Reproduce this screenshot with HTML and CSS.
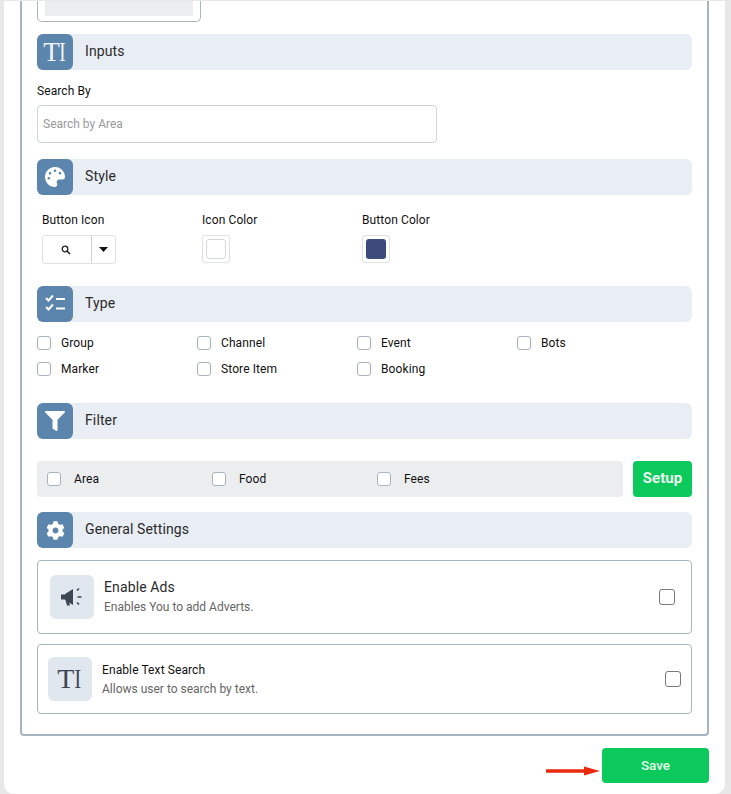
FILE: index.html
```html
<!DOCTYPE html>
<html lang="en">
<head>
<meta charset="utf-8">
<title>Search settings</title>
<link rel="stylesheet" href="styles.css">
</head>
<body>
<main class="modal">
  <div class="panel">
    <div class="stub"><div class="stub-fill"></div></div>

    <div class="section sec-inputs">
      <span class="sec-icon serif-icon">T<span class="narrow-i">I</span></span><h2>Inputs</h2>
    </div>
    <label class="field-label">Search By</label>
    <input class="search-input" type="text" placeholder="Search by Area">

    <div class="section sec-style">
      <span class="sec-icon"><svg class="ic-20" viewBox="0 0 512 512"><path fill="#fff" d="M204.3 5C104.9 24.4 24.8 104.3 5.2 203.4c-37 187 131.7 326.4 258.8 306.7 41.2-6.4 61.4-54.6 42.5-91.7-23.1-45.4 9.9-98.4 60.9-98.4h79.7c35.8 0 64.8-29.6 64.9-65.3C511.5 97.1 368.1-26.9 204.3 5zM96 320c-17.7 0-32-14.3-32-32s14.3-32 32-32 32 14.3 32 32-14.3 32-32 32zm32-128c-17.7 0-32-14.3-32-32s14.3-32 32-32 32 14.3 32 32-14.3 32-32 32zm128-64c-17.7 0-32-14.3-32-32s14.3-32 32-32 32 14.3 32 32-14.3 32-32 32zm128 64c-17.7 0-32-14.3-32-32s14.3-32 32-32 32 14.3 32 32-14.3 32-32 32z"/></svg></span><h2>Style</h2>
    </div>
    <div class="style-row">
      <div class="style-col">
        <div class="style-label">Button Icon</div>
        <div class="icon-picker">
          <span class="picker-main"><svg width="10" height="10" viewBox="0 0 10 10"><circle cx="4" cy="4" r="2.8" fill="none" stroke="#222" stroke-width="1.3"/><path d="M6 6l3 3" stroke="#222" stroke-width="1.6"/></svg></span>
          <span class="picker-caret"><svg width="9" height="5" viewBox="0 0 9 5"><path d="M0 0h9L4.500 5z" fill="#111"/></svg></span>
        </div>
      </div>
      <div class="style-col">
        <div class="style-label">Icon Color</div>
        <div class="swatch"><span class="swatch-fill swatch-white"></span></div>
      </div>
      <div class="style-col">
        <div class="style-label">Button Color</div>
        <div class="swatch"><span class="swatch-fill swatch-navy"></span></div>
      </div>
    </div>

    <div class="section sec-type">
      <span class="sec-icon"><svg class="ic-22" viewBox="0 0 22 22"><path d="M2 5l2.500 2.500L9 2.500M2 14l2.500 2.500L9 11.500" fill="none" stroke="#fff" stroke-width="2"/><path d="M12 6h9M12 15.500h9" stroke="#fff" stroke-width="2.200"/></svg></span><h2>Type</h2>
    </div>
    <div class="type-grid">
      <label class="check"><span class="box"></span>Group</label>
      <label class="check"><span class="box"></span>Channel</label>
      <label class="check"><span class="box"></span>Event</label>
      <label class="check"><span class="box"></span>Bots</label>
      <label class="check"><span class="box"></span>Marker</label>
      <label class="check"><span class="box"></span>Store Item</label>
      <label class="check"><span class="box"></span>Booking</label>
    </div>

    <div class="section sec-filter">
      <span class="sec-icon"><svg class="ic-20" viewBox="0 0 512 512"><path fill="#fff" d="M487.976 0H24.028C2.71 0-8.047 25.866 7.058 40.971L192 225.941V432c0 7.831 3.821 15.17 10.237 19.662l80 55.98C298.02 518.69 320 507.493 320 487.98V225.941l184.947-184.97C520.021 25.896 509.338 0 487.976 0z"/></svg></span><h2>Filter</h2>
    </div>
    <div class="filter-row">
      <div class="filter-list">
        <label class="check filter-check"><span class="box"></span>Area</label>
        <label class="check filter-check"><span class="box"></span>Food</label>
        <label class="check filter-check"><span class="box"></span>Fees</label>
      </div>
      <button class="setup-btn" type="button">Setup</button>
    </div>

    <div class="section sec-general">
      <span class="sec-icon"><svg class="ic-19" viewBox="0 0 512 512"><path fill="#fff" d="M487.4 315.7l-42.6-24.6c4.3-23.2 4.3-47 0-70.2l42.6-24.6c4.900-2.800 7.100-8.600 5.500-14-11.100-35.600-30-67.800-54.700-94.600-3.800-4.100-10-5.100-14.800-2.300L380.800 110c-17.900-15.400-38.500-27.300-60.800-35.100V25.800c0-5.600-3.900-10.500-9.400-11.700-36.700-8.200-74.300-7.800-109.200 0-5.500 1.200-9.400 6.100-9.400 11.700V75c-22.200 7.900-42.800 19.800-60.800 35.100L88.700 85.500c-4.900-2.800-11-1.900-14.800 2.300-24.700 26.700-43.600 58.900-54.700 94.600-1.700 5.400.6 11.200 5.500 14L67.300 221c-4.300 23.200-4.300 47 0 70.200l-42.600 24.600c-4.900 2.800-7.100 8.600-5.500 14 11.100 35.600 30 67.800 54.700 94.600 3.800 4.100 10 5.100 14.800 2.300l42.600-24.600c17.900 15.400 38.500 27.300 60.800 35.100v49.200c0 5.600 3.900 10.500 9.400 11.700 36.700 8.200 74.300 7.800 109.200 0 5.500-1.200 9.400-6.100 9.400-11.700v-49.200c22.200-7.900 42.800-19.800 60.800-35.100l42.600 24.600c4.900 2.800 11 1.900 14.800-2.300 24.700-26.700 43.600-58.900 54.700-94.600 1.500-5.500-.7-11.300-5.600-14.100zM256 336c-44.100 0-80-35.900-80-80s35.900-80 80-80 80 35.900 80 80-35.900 80-80 80z"/></svg></span><h2>General Settings</h2>
    </div>

    <div class="card card-ads">
      <span class="tile"><svg width="24" height="20" viewBox="0 0 24 20"><path fill="#3d4654" d="M1 7.500h4v5H1zM5 7l8-5v16l-8-5zM5.500 13h3l1.500 5.500H7z"/><path d="M17 3.500l2-2M17.500 10h4M17 15.500l2 2" stroke="#3d4654" stroke-width="1.600" fill="none"/></svg></span>
      <div class="card-text">
        <div class="card-title">Enable Ads</div>
        <div class="card-desc">Enables You to add Adverts.</div>
      </div>
      <span class="card-box"></span>
    </div>

    <div class="card card-text-search">
      <span class="tile serif-tile">T<span class="tile-i">I</span></span>
      <div class="card-text">
        <div class="card-title small">Enable Text Search</div>
        <div class="card-desc">Allows user to search by text.</div>
      </div>
      <span class="card-box"></span>
    </div>
  </div>

  <div class="footer">
    <svg class="arrow" width="54" height="10" viewBox="0 0 54 10"><path d="M0 3.300h38V.500L54 5 38 9.500V6.700H0z" fill="#ea2a0e"/></svg>
    <button class="save-btn" type="button">Save</button>
  </div>
</main>
</body>
</html>
```
FILE: styles.css
```css
* { box-sizing: border-box; }

html, body {
  margin: 0;
  height: 794px;
  overflow: hidden;
  background: #e8e8e8;
}

body {
  font-family: Roboto, "Liberation Sans", sans-serif;
  color: #111;
}

.modal {
  margin: 1px 6px 0 4px;
  height: 793px;
  padding: 0 16px;
  background: #fff;
  border-radius: 0 0 10px 10px;
}

.panel {
  height: 735px;
  padding: 0 15px;
  border: 2px solid #a6b5bf;
  border-top: 0;
  border-radius: 0 0 4px 4px;
}

.stub {
  width: 164px;
  height: 21px;
  padding: 0 7px;
  border: 1px solid #a9b6bf;
  border-top: 0;
  border-radius: 0 0 5px 5px;
}

.stub-fill {
  height: 15px;
  background: #ecedee;
}

.section {
  display: flex;
  align-items: center;
  height: 36px;
  background: #e9edf4;
  border-radius: 6px;
}

.section h2 {
  margin: 0 0 0 12px;
  padding-bottom: 2px;
  font-size: 14px;
  font-weight: 400;
  letter-spacing: 0.12px;
  line-height: 34px;
  color: #2b2b2b;
}

.sec-icon {
  display: flex;
  flex: none;
  align-items: center;
  justify-content: center;
  width: 36px;
  height: 36px;
  background: #5b85ac;
  border-radius: 6px;
}

.serif-icon {
  font-family: "Liberation Serif", serif;
  font-size: 27px;
  line-height: 36px;
  color: #f1f5f8;
}

.narrow-i {
  display: inline-block;
  margin-left: -2px;
  transform: scaleX(0.7);
}

.ic-20 { width: 20px; height: 20px; }
.ic-22 { width: 22px; height: 22px; }
.ic-19 { width: 19px; height: 19px; }

.sec-inputs { margin-top: 12px; }
.sec-style { margin-top: 16px; }
.sec-type { margin-top: 22px; }
.sec-filter { margin-top: 27px; }
.sec-general { margin-top: 15px; }

.field-label {
  display: block;
  margin-top: 14px;
  font-size: 12px;
  font-weight: 400;
  letter-spacing: 0.1px;
  line-height: 14px;
}

.search-input {
  display: block;
  width: 400px;
  height: 38px;
  margin-top: 7px;
  padding: 0 5px;
  border: 1px solid #ced4da;
  border-radius: 4px;
  font: 12px Roboto, "Liberation Sans", sans-serif;
  outline: 0;
}

.search-input::placeholder { color: #999; }

.style-row {
  display: grid;
  grid-template-columns: repeat(3, 160px);
  margin-top: 18px;
  padding-left: 5px;
}

.style-label {
  margin-bottom: 8px;
  font-size: 12px;
  font-weight: 400;
  letter-spacing: 0.1px;
  line-height: 14px;
}

.icon-picker {
  display: flex;
  width: 74px;
  height: 29px;
  border: 1px solid #dfe1e3;
  border-radius: 3px;
}

.picker-main,
.picker-caret {
  display: flex;
  align-items: center;
  justify-content: center;
}

.picker-main {
  width: 49px;
  padding-right: 2px;
  border-right: 1px solid #cfd3d6;
}

.picker-caret { flex: 1; }

.swatch {
  display: flex;
  align-items: center;
  justify-content: center;
  width: 28px;
  height: 28px;
  border: 1px solid #dfe1e3;
  border-radius: 3px;
}

.swatch-fill {
  width: 20px;
  height: 20px;
  border-radius: 3px;
}

.swatch-white { border: 1px solid #d4d8db; background: #fff; }
.swatch-navy { background: #3d4a7c; }

.type-grid {
  display: grid;
  grid-template-columns: repeat(4, 160px);
  row-gap: 12px;
  margin-top: 14px;
}

.check {
  display: flex;
  align-items: center;
  gap: 10px;
  height: 14px;
  font-size: 12px;
  font-weight: 400;
  letter-spacing: 0.1px;
  line-height: 14px;
  color: #111;
}

.box {
  flex: none;
  width: 14px;
  height: 14px;
  background: #fff;
  border: 1px solid #a9b3bf;
  border-radius: 3px;
}

.filter-row {
  display: flex;
  justify-content: space-between;
  margin-top: 22px;
}

.filter-list {
  display: grid;
  grid-template-columns: repeat(3, 165px);
  align-items: center;
  width: 586px;
  height: 36px;
  padding-left: 10px;
  background: #ecedee;
  border-radius: 4px;
}

.filter-check { gap: 13px; }

.setup-btn {
  width: 59px;
  height: 36px;
  padding: 0 0 2px;
  border: 0;
  border-radius: 4px;
  background: #0bc95a;
  color: #eafbf1;
  font: 700 15px Roboto, "Liberation Sans", sans-serif;
}

.card {
  display: flex;
  align-items: center;
  border: 1px solid #a6b5bf;
  border-radius: 4px;
}

.card-ads {
  height: 74px;
  margin-top: 12px;
  padding: 0 16px 0 12px;
}

.card-text-search {
  height: 70px;
  margin-top: 10px;
  padding: 0 10px;
}

.tile {
  display: flex;
  flex: none;
  align-items: center;
  justify-content: center;
  width: 44px;
  height: 44px;
  background: #e0e7ee;
  border-radius: 6px;
}

.serif-tile {
  font-family: "Liberation Serif", serif;
  font-size: 28px;
  color: #3d4654;
}

.tile-i {
  display: inline-block;
  margin-left: -1px;
  transform: scaleX(0.7);
}

.card-text {
  flex: 1;
  margin-left: 10px;
}

.card-ads .card-text { padding-bottom: 2px; }

.card-title {
  font-size: 14px;
  font-weight: 400;
  letter-spacing: 0.12px;
  line-height: 16px;
  color: #2b2b2b;
}

.card-title.small {
  font-size: 12px;
  letter-spacing: 0.1px;
  line-height: 14px;
  color: #111;
}

.card-desc {
  margin-top: 5px;
  font-size: 12px;
  line-height: 14px;
  color: #666;
}

.card-box {
  flex: none;
  width: 16px;
  height: 16px;
  border: 1px solid #77797b;
  border-radius: 3px;
}

.footer {
  display: flex;
  align-items: center;
  justify-content: flex-end;
  margin-top: 12px;
}

.arrow { margin: 11px 2px 0 0; }

.save-btn {
  width: 107px;
  height: 35px;
  padding: 0 0 2px;
  border: 0;
  border-radius: 4px;
  background: #0bc95a;
  color: #e4f9ec;
  font: 500 13.5px Roboto, "Liberation Sans", sans-serif;
}
```
